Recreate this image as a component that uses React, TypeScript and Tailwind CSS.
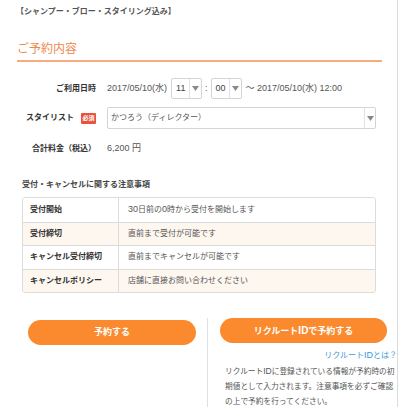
import React from "react";

const Arrow: React.FC = () => (
  <svg width="7" height="5" viewBox="0 0 7 5">
    <polygon points="0,0 7,0 3.5,5" fill="#8a8a8a" />
  </svg>
);

const SmallSelect: React.FC<{ value: string }> = ({ value }) => (
  <div className="flex h-[21px] w-[31px] rounded-[2px] border border-[#d4d4d4] bg-white">
    <span className="flex-1 pl-[4px] text-[9px] leading-[19px] text-[#444]">{value}</span>
    <span className="flex w-[12px] items-center justify-center border-l border-[#e2e2e2]">
      <Arrow />
    </span>
  </div>
);

const rows: { label: string; value: React.ReactNode; alt: boolean }[] = [
  {
    label: "受付開始",
    value: (
      <>
        <span className="text-[9px]">30</span>日前の<span className="text-[9px]">0</span>時から受付を開始します
      </>
    ),
    alt: false,
  },
  { label: "受付締切", value: "直前まで受付が可能です", alt: true },
  { label: "キャンセル受付締切", value: "直前までキャンセルが可能です", alt: false },
  { label: "キャンセルポリシー", value: "店舗に直接お問い合わせください", alt: true },
];

export default function App() {
  return (
    <div className="h-[407px] w-[400px] overflow-hidden bg-white font-['Liberation_Sans','Noto_Sans_CJK_JP',sans-serif] text-[#555]">
      <div className="flex h-full w-[398px] flex-col border-r border-[#dcdcdc]">
        <p className="shrink-0 pl-[16px] pt-[6px] text-[8px] font-bold leading-[12px] text-[#555]">
          【シャンプー・ブロー・スタイリング込み】
        </p>
        <h2 className="ml-[17px] mt-[23px] w-[365px] shrink-0 border-b-2 border-[#f7ab7f] pb-[3px] text-[12px] leading-[16px] text-[#f0874a]">
          ご予約内容
        </h2>

        <div className="ml-[26px] mt-[16px] flex shrink-0 flex-col gap-[8px]">
          <div className="flex h-[21px] items-center gap-[11px]">
            <span className="w-[70px] text-right text-[8px] font-bold text-[#333]">ご利用日時</span>
            <div className="flex items-center text-[9px] text-[#555]">
              <span className="mr-[4px]">2017/05/10(水)</span>
              <SmallSelect value="11" />
              <span className="mx-[3px]">:</span>
              <SmallSelect value="00" />
              <span className="ml-[4px]">〜 2017/05/10(水) 12:00</span>
            </div>
          </div>
          <div className="flex h-[22px] items-center gap-[11px]">
            <div className="flex w-[70px] items-center justify-between">
              <span className="text-[8px] font-bold text-[#333]">スタイリスト</span>
              <span className="flex h-[11px] w-[15px] items-center justify-center rounded-[1px] bg-[#e8533c] text-[6px] font-bold leading-none text-white">
                必須
              </span>
            </div>
            <div className="flex h-[22px] w-[269px] rounded-[2px] border border-[#d4d4d4] bg-white">
              <span className="flex-1 pl-[3px] text-[8px] leading-[20px] text-[#555]">かつろう（ディレクター）</span>
              <span className="flex w-[11px] items-center justify-center border-l border-[#e2e2e2]">
                <Arrow />
              </span>
            </div>
          </div>
          <div className="mt-[1px] flex h-[21px] items-center gap-[11px]">
            <span className="w-[70px] text-right text-[8px] font-bold text-[#333]">合計料金（税込）</span>
            <span className="text-[9px] text-[#555]">6,200 円</span>
          </div>
        </div>

        <p className="ml-[22px] mt-[20px] shrink-0 text-[8px] font-bold leading-[12px] text-[#444]">
          受付・キャンセルに関する注意事項
        </p>
        <div className="ml-[22px] mt-[6px] w-[354px] shrink-0 overflow-hidden rounded-[3px] border border-[#dcdcdc]">
          {rows.map((r, i) => (
            <div
              key={r.label}
              className={`flex h-[23.5px] text-[8px] ${i > 0 ? "border-t border-[#dcdcdc]" : ""} ${r.alt ? "bg-[#fdf7f0]" : "bg-white"}`}
            >
              <span className="flex w-[96px] items-center border-r border-[#dcdcdc] pl-[7px] font-bold text-[#333]">
                {r.label}
              </span>
              <span className="flex items-center pl-[9px] text-[#555]">{r.value}</span>
            </div>
          ))}
        </div>

        <div className="mt-[25px] flex flex-1">
          <div className="w-[208px] border-r border-[#e0e0e0] pl-[28px]">
            <button className="h-[25px] w-[168px] rounded-full bg-[#fb8a2f] text-[9px] font-bold text-white">
              予約する
            </button>
          </div>
          <div className="flex flex-1 flex-col pl-[12px]">
            <button className="h-[25px] w-[167px] rounded-full bg-[#fb8a2f] text-[9px] font-bold text-white">
              リクルート<span className="text-[10px]">ID</span>で予約する
            </button>
            <a className="mt-[6px] self-end text-[8px] leading-[12px] text-[#3a9ad9]">
              リクルート<span className="text-[9px]">ID</span>とは？
            </a>
            <p className="ml-[5px] mt-[2px] whitespace-nowrap text-[7.7px] leading-[15px] text-[#555]">
              リクルート<span className="text-[8.5px]">ID</span>に登録されている情報が予約時の初
              <br />
              期値として入力されます。注意事項を必ずご確認
              <br />
              の上で予約を行ってください。
            </p>
          </div>
        </div>
      </div>
    </div>
  );
}
